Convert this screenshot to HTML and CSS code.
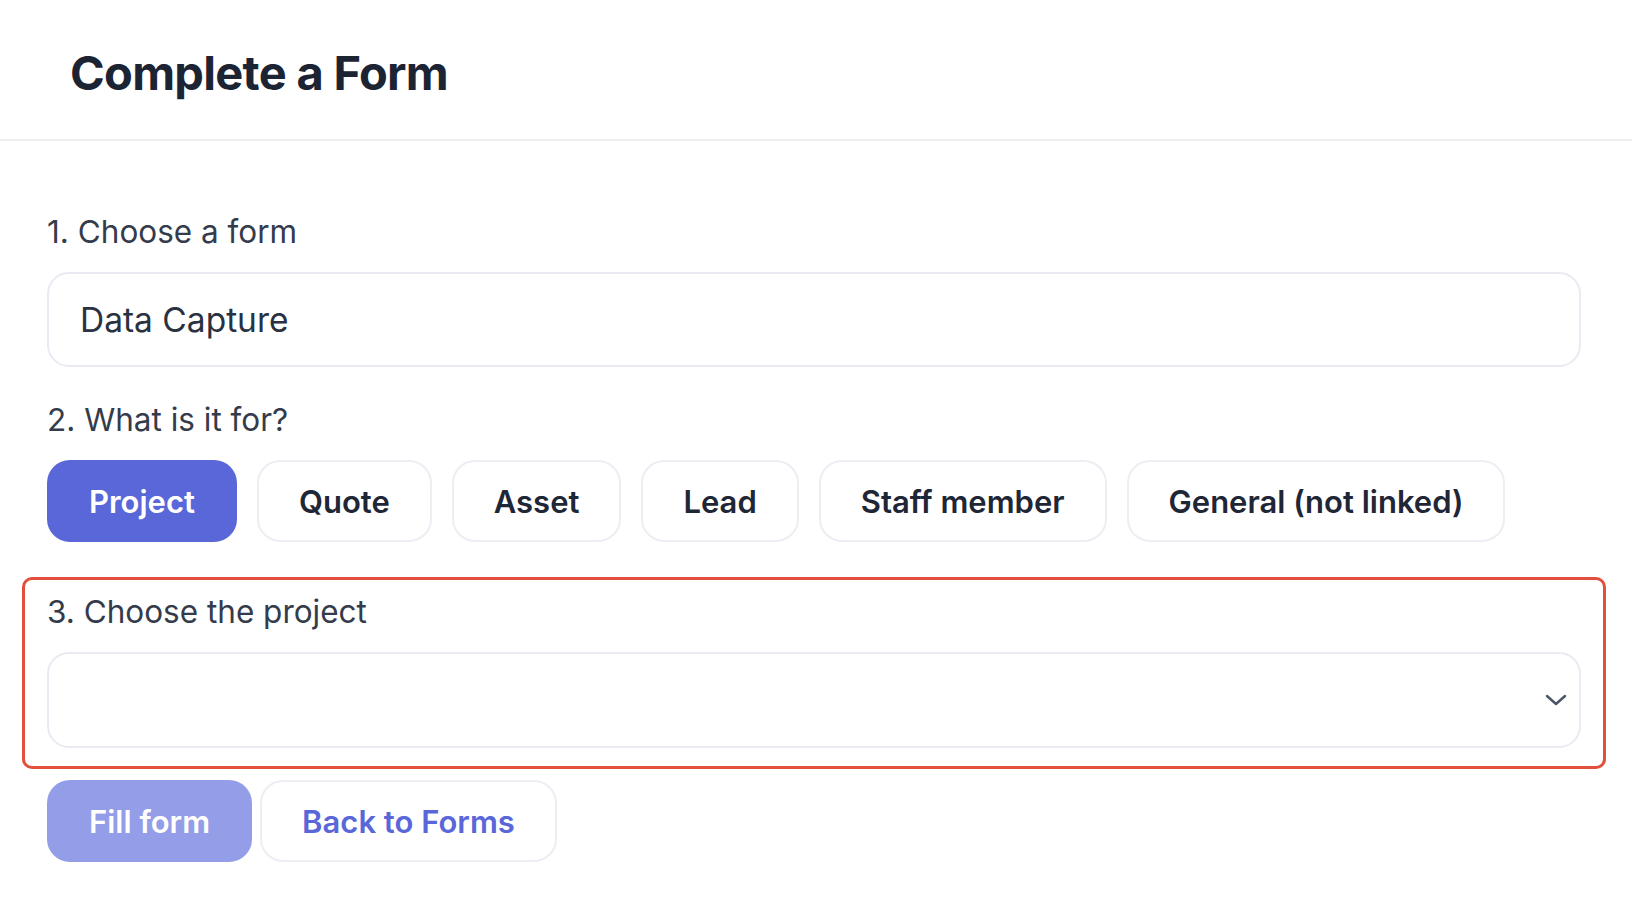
FILE: index.html
```html
<!DOCTYPE html>
<html>
    <head>
        <title>Complete a Form</title>
        <link rel="stylesheet" href="styles.css">
    </head>
    <body>
        <header class="page-head">
            <h1>Complete a Form</h1>
        </header>
        <main class="form-body">
            <div class="field">
                <label class="field-label">1. Choose a form</label>
                <div class="text-input">Data Capture</div>
            </div>
            <div class="field">
                <label class="field-label">2. What is it for?</label>
                <div class="choices">
                    <div class="choice active">Project</div>
                    <div class="choice">Quote</div>
                    <div class="choice">Asset</div>
                    <div class="choice">Lead</div>
                    <div class="choice">Staff member</div>
                    <div class="choice">General (not linked)</div>
                </div>
            </div>
            <!-- missing selection, flagged in red -->
            <div class="field field-error">
                <label class="field-label">3. Choose the project</label>
                <div class="select-input">
                    <svg class="chevron" width="22" height="12" viewBox="0 0 22 12">
                        <path d="M2 2 L11 10 L20 2" fill="none" stroke="#4a5568" stroke-width="2.4" stroke-linecap="round" stroke-linejoin="round"/>
                    </svg>
                </div>
            </div>
            <div class="actions">
                <div class="btn btn-primary disabled">Fill form</div>
                <div class="btn btn-outline">Back to Forms</div>
            </div>
        </main>
    </body>
</html>
```

FILE: styles.css
```css
body {
    margin: 0;
    background: #fff;
    font-family: Inter, "Noto Sans", sans-serif;
    color: #2d3748;
}
.page-head {
    padding: 44px 0 38px 70px;
    border-bottom: 2px solid #eceef2;
}
.page-head h1 {
    margin: 0;
    font-size: 47px;
    line-height: 57px;
    font-weight: 700;
    letter-spacing: -0.015em;
    color: #1c2434;
}
.form-body {
    padding: 71px 51px 0 47px;
}
.field {
    margin-bottom: 33px;
}
.field-label {
    display: block;
    font-size: 31.5px;
    line-height: 40px;
    margin-bottom: 20px;
    color: #343b4b;
}
.text-input, .select-input {
    box-sizing: border-box;
    height: 95px;
    border: 2px solid #e9eaf2;
    border-radius: 22px;
    display: flex;
    align-items: center;
}
.text-input {
    padding-left: 31px;
    font-size: 33.5px;
    color: #2a3140;
}
.select-input {
    height: 96px;
    justify-content: flex-end;
    padding-right: 12px;
}
.choices {
    display: flex;
    gap: 20px;
}
.choice, .btn {
    box-sizing: border-box;
    height: 82px;
    padding: 0 40px;
    border: 2px solid #eceef4;
    border-radius: 23px;
    display: flex;
    align-items: center;
    font-size: 31px;
    font-weight: 600;
    color: #1f2636;
    cursor: pointer;
    user-select: none;
}
.choice.active {
    background: #5a67d8;
    border-color: #5a67d8;
    color: #fff;
}
.field-error {
    margin: 35px -25px 11px;
    padding: 12px 22px 18px;
    border: 3px solid #e2503d;
    border-radius: 10px;
}
.actions {
    display: flex;
    gap: 8px;
}
.btn-primary {
    background: #5a67d8;
    border-color: #5a67d8;
    color: #fff;
}
.btn-primary.disabled {
    background: #939de8;
    border-color: #939de8;
    cursor: default;
}
.btn-outline {
    color: #5a67d8;
}
```
